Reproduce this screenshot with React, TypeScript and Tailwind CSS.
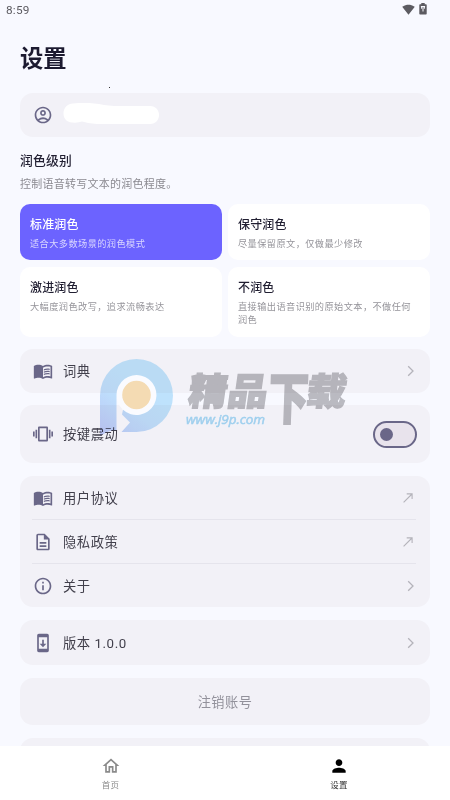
import React from "react";
import type { ReactNode } from "react";
import {
  MdOutlineAccountCircle,
  MdMenuBook,
  MdVibration,
  MdOutlineDescription,
  MdInfoOutline,
  MdSystemUpdate,
  MdOutlineHome,
  MdPerson,
  MdSignalWifi4Bar,
} from "react-icons/md";

function Chevron() {
  return (
    <svg width="8" height="12" viewBox="0 0 8 12" fill="none" stroke="#b4b3ba" strokeWidth="1.3">
      <path d="M1.2 1.2 6 6l-4.8 4.8" />
    </svg>
  );
}

function ArrowOut() {
  return (
    <svg className="mr-[2px] mt-px" width="10" height="10" viewBox="0 0 10 10" fill="none" stroke="#b4b3ba" strokeWidth="1.1">
      <path d="M.6 9.4 9 1M3.7.9h5.4v5" />
    </svg>
  );
}

function Battery() {
  return (
    <svg width="8" height="12" viewBox="0 0 8 12">
      <path d="M2.3 0h3.4v1.2H7c.4 0 .7.3.7.7v8.8c0 .4-.3.7-.7.7H1a.7.7 0 0 1-.7-.7V1.9c0-.4.3-.7.7-.7h1.3z" fill="#5c5b61" />
      <path d="M1.9 3.5h4.2M4 3v5.5M2.6 3.5v2.2M5.4 3.5v2.2" stroke="#f8f9ff" strokeWidth="1" fill="none" />
    </svg>
  );
}

function Row({ icon, label, end }: { icon: ReactNode; label: string; end: ReactNode }) {
  return (
    <div className="flex min-h-0 flex-1 items-center pl-[13px] pr-[15px]">
      <span className="flex w-5 shrink-0 justify-center text-[#6a6788]">{icon}</span>
      <span className="ml-[10px] flex-1 pt-[2px] text-[13.3px] leading-5 tracking-[0.55px] text-[#413f4b]">{label}</span>
      {end}
    </div>
  );
}

function Panel({ className, children }: { className: string; children?: ReactNode }) {
  return <div className={`flex shrink-0 flex-col rounded-[13px] bg-[#f2f1f7] ${className}`}>{children}</div>;
}

function Level({ title, desc, active = false }: { title: string; desc: string; active?: boolean }) {
  return (
    <div className={`rounded-[10px] pl-[10px] pr-[12px] pt-3 ${active ? "bg-[#6c63ff]" : "bg-white"}`}>
      <div className={`text-[12px] font-medium leading-[18px] tracking-[0.15px] ${active ? "text-white" : "text-[#211f32]"}`}>{title}</div>
      <div className={`mt-1 text-[9.2px] leading-[12.5px] tracking-[0.42px] ${active ? "text-[#dad7ff]" : "text-[#95949a]"}`}>{desc}</div>
    </div>
  );
}

function Watermark() {
  return (
    <>
      <svg className="pointer-events-none absolute left-[115px] top-[374px]" width="43" height="43" viewBox="0 0 43 43">
        <circle cx="21.5" cy="21" r="20" fill="#fafbff" />
      </svg>
      <svg className="pointer-events-none absolute left-[95px] top-[350px] mix-blend-multiply" width="260" height="95" viewBox="95 350 260 95">
        <defs>
          <linearGradient id="mark" x1="0" y1="1" x2="0.5" y2="0.3">
            <stop offset="0" stopColor="#c0cbf8" />
            <stop offset="0.6" stopColor="#c4e3fb" />
            <stop offset="1" stopColor="#c4e8fc" />
          </linearGradient>
        </defs>
        <path
          d="M100 436V395.5a36.500 36.500 0 1 1 36.500 36.500H121.500l8.500-9.500-8-8 1-4.700A20 20 0 1 0 116.500 395V430Q109 430 100 436Z"
          fill="url(#mark)"
        />
        <circle cx="136.5" cy="395" r="14.3" fill="#f9dfb3" />
        <g fill="#bfbfc1" stroke="#bfbfc1" strokeWidth="1.3" fontFamily="Noto Sans CJK SC, sans-serif" fontWeight="900">
          <text fontSize="39" transform="translate(187 405) skewX(-8) scale(1 .96)">精</text>
          <text fontSize="39" transform="translate(226 405) skewX(-8) scale(1.040 .96)">品</text>
          <text fontSize="39" transform="translate(268 419) skewX(-2) scale(1.030 1.440)">下</text>
          <text fontSize="39" transform="translate(305 405) skewX(-8) scale(1.020 .96)">载</text>
        </g>
        <text x="186" y="424" fill="#a8dcf6" stroke="#a8dcf6" strokeWidth="0.5" fontFamily="Open Sans, sans-serif" fontStyle="italic" fontSize="13.5" textLength="79">www.j9p.com</text>
      </svg>
    </>
  );
}

export default function App() {
  return (
    <div className="relative flex h-[800px] w-[450px] flex-col overflow-hidden bg-[#f8f9ff] font-[Roboto,'Noto_Sans_CJK_SC',sans-serif]">
      <header className="flex h-5 shrink-0 items-center justify-between pl-[6px] pr-[23px] text-[#5c5b61]">
        <span className="pt-px text-[11.8px] tracking-[0.2px]">8:59</span>
        <span className="flex items-center gap-1 pb-[2px]">
          <MdSignalWifi4Bar size={13} />
          <Battery />
        </span>
      </header>

      <main className="flex min-h-0 flex-1 flex-col overflow-hidden px-5">
        <h1 className="mt-[22px] h-[30px] shrink-0 pt-[2px] text-[23.3px] font-bold leading-[30px] text-[#1c1a30]">设置</h1>
        <div className="flex h-[21px] shrink-0 items-center justify-start pl-[89px] pt-[9px]">
          <span className="size-px bg-[#333333]" />
        </div>
        <Panel className="h-[44px]">
          <div className="flex h-full items-center pl-[13px]">
            <MdOutlineAccountCircle size={20} className="text-[#6a6788]" />
            <svg className="ml-[10px]" width="98" height="24" viewBox="0 0 98 24">
              <path d="M10 .5C-2 1-3 19 9 19.5q6 .5 10-1c6 1.5 10 2.5 18 2.500h50c12 0 12-18 0-18-22 0-36 .5-46-1C31 0 22-.5 10 .5Z" fill="#fff" />
            </svg>
          </div>
        </Panel>

        <h2 className="mt-[13px] h-5 shrink-0 pt-px text-[12.8px] font-medium leading-5 tracking-[0.2px] text-[#211f32]">润色级别</h2>
        <p className="mt-[5px] h-[18px] shrink-0 pt-px text-[11px] leading-[18px] tracking-[0.25px] text-[#8b8a91]">控制语音转写文本的润色程度。</p>

        <div className="mt-[11px] grid shrink-0 grid-cols-[202px_202px] grid-rows-[56px_70px] gap-x-[6px] gap-y-[7px]">
          <Level active title="标准润色" desc="适合大多数场景的润色模式" />
          <Level title="保守润色" desc="尽量保留原文，仅做最少修改" />
          <Level title="激进润色" desc="大幅度润色改写，追求流畅表达" />
          <Level title="不润色" desc="直接输出语音识别的原始文本，不做任何润色" />
        </div>

        <Panel className="mt-[12px] h-[44px]">
          <Row icon={<MdMenuBook size={20} />} label="词典" end={<Chevron />} />
        </Panel>
        <Panel className="mt-[12px] h-[58px]">
          <Row
            icon={<MdVibration size={20} />}
            label="按键震动"
            end={
              <span className="-mr-[2px] flex h-[27px] w-[44px] items-center rounded-full border-2 border-[#6a6788] bg-[#e8e3ec] pl-[5px]">
                <span className="size-[13px] rounded-full bg-[#6a6788]" />
              </span>
            }
          />
        </Panel>
        <Panel className="mt-[13px] h-[131px]">
          <Row icon={<MdMenuBook size={20} />} label="用户协议" end={<ArrowOut />} />
          <div className="ml-3 mr-[14px] h-px bg-[#e5e4ec]" />
          <Row icon={<MdOutlineDescription size={20} />} label="隐私政策" end={<ArrowOut />} />
          <div className="ml-3 mr-[14px] h-px bg-[#e5e4ec]" />
          <Row icon={<MdInfoOutline size={20} />} label="关于" end={<Chevron />} />
        </Panel>
        <Panel className="mt-[13px] h-[45px]">
          <Row icon={<MdSystemUpdate size={20} />} label="版本 1.0.0" end={<Chevron />} />
        </Panel>
        <Panel className="mt-[13px] h-[47px] items-center justify-center">
          <span className="pt-[2px] text-[13.2px] leading-5 tracking-[0.5px] text-[#92919b]">注销账号</span>
        </Panel>
        <Panel className="mt-[13px] h-[47px]" />
      </main>

      <nav className="flex h-[54px] shrink-0 bg-white text-[8.5px] leading-3 tracking-[0.3px]">
        <div className="flex w-[221px] shrink-0 flex-col items-center pt-[10px] text-[#8a8a8a]">
          <MdOutlineHome size={20} />
          <span className="mt-[3px]">首页</span>
        </div>
        <div className="flex flex-1 flex-col items-center pl-[7px] pt-[10px] text-[#333333]">
          <MdPerson size={20} className="text-black" />
          <span className="mt-[3px]">设置</span>
        </div>
      </nav>
      <Watermark />
    </div>
  );
}
